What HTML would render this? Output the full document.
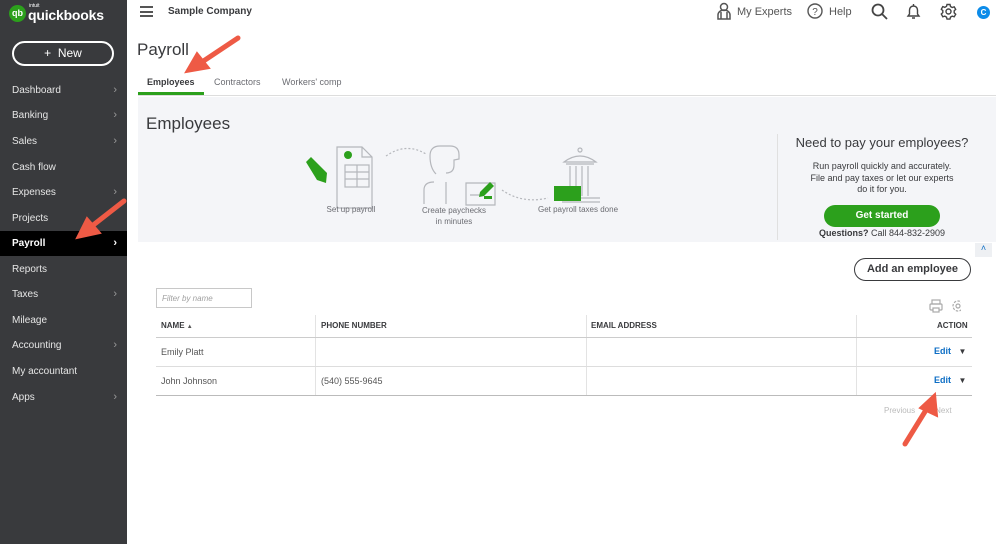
<!DOCTYPE html>
<html><head><style>
*{margin:0;padding:0;box-sizing:border-box}
body{width:999px;height:544px;overflow:hidden;background:#fff;font-family:"Liberation Sans",sans-serif;position:relative;color:#393a3d}
.sb{position:absolute;left:0;top:0;width:127px;height:544px;background:#393a3d;color:#e8e8e8}
.logo{position:absolute;left:9px;top:4px;display:flex;align-items:center}
.qb{width:17px;height:17px;border-radius:50%;background:#2ca01c;color:#fff;font-size:9px;font-weight:bold;text-align:center;line-height:17px}
.new{position:absolute;left:12px;top:41px;width:102px;height:25px;border:2px solid #fff;border-radius:14px;color:#fff;font-size:12px;text-align:center;line-height:21px}
.nav{position:absolute;left:0;width:127px;height:25px;font-size:10px;line-height:25px;padding-left:12px;color:#e6e6e6}
.nav .c{position:absolute;right:10px;top:0;color:#999;font-size:11px}
.act{background:#000;color:#fff;font-weight:bold}
.abs{position:absolute}
</style></head><body>
<div class="sb">
 <div class="logo"><div class="qb">qb</div><div style="margin-left:2px;color:#fff;line-height:1"><div style="font-size:5px;margin-left:1px">intuit</div><div style="font-size:14px;font-weight:bold;margin-top:-1px;letter-spacing:-0.2px">quickbooks</div></div></div>
 <div class="new">+&nbsp; New</div>
 <div class="nav" style="top:78px">Dashboard<span class="c">›</span></div>
 <div class="nav" style="top:103px">Banking<span class="c">›</span></div>
 <div class="nav" style="top:129px">Sales<span class="c">›</span></div>
 <div class="nav" style="top:155px">Cash flow</div>
 <div class="nav" style="top:180px">Expenses<span class="c">›</span></div>
 <div class="nav" style="top:206px">Projects</div>
 <div class="nav act" style="top:231px">Payroll<span class="c" style="color:#fff">›</span></div>
 <div class="nav" style="top:257px">Reports</div>
 <div class="nav" style="top:282px">Taxes<span class="c">›</span></div>
 <div class="nav" style="top:308px">Mileage</div>
 <div class="nav" style="top:333px">Accounting<span class="c">›</span></div>
 <div class="nav" style="top:359px">My accountant</div>
 <div class="nav" style="top:385px">Apps<span class="c">›</span></div>
</div>
<div class="abs" style="left:140px;top:6px;width:13px;height:11px;border-top:2px solid #555;border-bottom:2px solid #555"><div style="margin-top:2.5px;height:2px;background:#555"></div></div>
<div class="abs" style="left:168px;top:6px;font-size:10px;font-weight:bold;color:#393a3d">Sample Company</div>
<svg class="abs" style="left:716px;top:2px" width="16" height="18" viewBox="0 0 16 18" fill="none" stroke="#555" stroke-width="1.5"><circle cx="8" cy="5" r="3.5"/><path d="M2 17v-4a6 5 0 0112 0v4zM5 10v7M11 10v7"/></svg>
<div class="abs" style="left:737px;top:6px;font-size:11px;color:#555">My Experts</div>
<svg class="abs" style="left:807px;top:3px" width="16" height="16" viewBox="0 0 16 16"><circle cx="8" cy="8" r="7" fill="none" stroke="#555" stroke-width="1.4"/><text x="8" y="12" font-size="10" text-anchor="middle" fill="#555" font-family="Liberation Sans">?</text></svg>
<div class="abs" style="left:829px;top:6px;font-size:11px;color:#555">Help</div>
<svg class="abs" style="left:871px;top:3px" width="17" height="17" fill="none" stroke="#444" stroke-width="1.8"><circle cx="7" cy="7" r="5.5"/><path d="M11 11l5 5"/></svg>
<svg class="abs" style="left:906px;top:3px" width="15" height="17" fill="none" stroke="#444" stroke-width="1.4"><path d="M2 13h11l-1.5-2V7a4 4 0 00-8 0v4zM6 15h3M7.5 1v2"/></svg>
<svg class="abs" style="left:940px;top:3px" width="17" height="17" viewBox="0 0 17 17" fill="none" stroke="#444" stroke-width="1.4"><circle cx="8.5" cy="8.5" r="2.5"/><path d="M7 1.5h3l.5 2 1.7 1 2-.7 1.5 2.6-1.5 1.4v2l1.5 1.4-1.5 2.6-2-.7-1.7 1-.5 2H7l-.5-2-1.7-1-2 .7L1.3 11l1.5-1.4v-2L1.3 6.2 2.8 3.6l2 .7 1.7-1z"/></svg>
<div class="abs" style="left:977px;top:6px;width:13px;height:13px;border-radius:50%;background:#0d8ce9;color:#fff;font-size:8px;font-weight:bold;text-align:center;line-height:13px">C</div>
<div class="abs" style="left:137px;top:40px;font-size:17px;color:#393a3d">Payroll</div>
<div class="abs" style="left:147px;top:77px;font-size:9px;font-weight:bold">Employees</div>
<div class="abs" style="left:138px;top:92px;width:66px;height:3px;background:#2ca01c"></div>
<div class="abs" style="left:214px;top:77px;font-size:9px;color:#6b6c72">Contractors</div>
<div class="abs" style="left:282px;top:77px;font-size:9px;color:#6b6c72">Workers' comp</div>
<div class="abs" style="left:138px;top:95px;width:858px;height:1px;background:#ddd"></div>
<div class="abs" style="left:138px;top:97px;width:858px;height:145px;background:#f4f5f8"></div>
<div class="abs" style="left:777px;top:134px;width:1px;height:106px;background:#e0e0e0"></div>
<div class="abs" style="left:146px;top:114px;font-size:17px;color:#393a3d">Employees</div>
<svg class="abs" style="left:300px;top:140px" width="330" height="70" fill="none" stroke="#b5b7bc" stroke-width="1.2">
 <path d="M37 7h25l10 10v51H37z M62 7v10h10"/><rect x="45" y="25" width="24" height="22"/><path d="M45 32h24M45 39h24M57 25v22"/>
 <circle cx="48" cy="15" r="4" fill="#2ca01c" stroke="none"/>
 <path d="M6 22l5-5 16 16-1 10-9-3z" fill="#2ca01c" stroke="none"/>
 <path d="M86 16q20-14 40-2" stroke-dasharray="2 2"/>
 <path d="M136 34q-6-6-6-18q0-10 10-10h10q9 0 9 9v4l-5 1v5q0 8-8 8M124 64v-14q0-8 10-8M146 42v22M166 43h29v22h-29z M170 55h10"/>
 <path d="M180 52l10-10 4 4-10 10-5 1z" fill="#2ca01c" stroke="none"/><rect x="184" y="56" width="8" height="3" fill="#2ca01c" stroke="none"/>
 <path d="M202 50q20 14 46 8" stroke-dasharray="2 2"/>
 <path d="M264 22q16-12 32 0zM266 24h28M270 26v30M276 26v30M282 26v30M288 26v30M262 58h38M262 62h38"/>
 <circle cx="280" cy="10" r="2"/>
 <rect x="254" y="46" width="27" height="15" fill="#2ca01c" stroke="none"/>
</svg>
<div class="abs" style="left:310px;top:205px;width:82px;text-align:center;font-size:8px;color:#6b6c72">Set up payroll</div>
<div class="abs" style="left:410px;top:205px;width:88px;text-align:center;font-size:8px;color:#6b6c72;line-height:11px">Create paychecks<br>in minutes</div>
<div class="abs" style="left:528px;top:205px;width:100px;text-align:center;font-size:8px;color:#6b6c72">Get payroll taxes done</div>
<div class="abs" style="left:780px;top:135px;width:204px;text-align:center;font-size:13px;color:#393a3d">Need to pay your employees?</div>
<div class="abs" style="left:780px;top:161px;width:204px;text-align:center;font-size:9px;line-height:11.5px;color:#393a3d">Run payroll quickly and accurately.<br>File and pay taxes or let our experts<br>do it for you.</div>
<div class="abs" style="left:824px;top:205px;width:116px;height:22px;border-radius:12px;background:#2ca01c;color:#fff;font-size:10px;font-weight:bold;text-align:center;line-height:22px">Get started</div>
<div class="abs" style="left:780px;top:228px;width:204px;text-align:center;font-size:9px"><b>Questions?</b> Call 844-832-2909</div>
<div class="abs" style="left:975px;top:243px;width:17px;height:14px;background:#eef0f3;color:#0d6ec5;font-size:9px;text-align:center">˄</div>
<div class="abs" style="left:854px;top:258px;width:117px;height:23px;border:1.5px solid #393a3d;border-radius:12px;text-align:center;line-height:21px;font-size:11px;font-weight:bold">Add an employee</div>
<div class="abs" style="left:156px;top:288px;width:96px;height:20px;border:1px solid #c8c8c8;font-size:8px;font-style:italic;color:#a0a0a0;padding:5px 5px">Filter by name</div>
<svg class="abs" style="left:929px;top:299px" width="32" height="14" fill="none" stroke="#aaa" stroke-width="1.2"><rect x="1" y="5" width="12" height="6" rx="1"/><rect x="3" y="1" width="8" height="4"/><rect x="4" y="9" width="6" height="4" fill="#fff"/><circle cx="29" cy="7" r="2"/><circle cx="29" cy="7" r="5" stroke-dasharray="2.5 1.3"/></svg>
<div class="abs" style="left:315px;top:315px;width:1px;height:80px;background:#e3e3e3"></div>
<div class="abs" style="left:586px;top:315px;width:1px;height:80px;background:#e3e3e3"></div>
<div class="abs" style="left:856px;top:315px;width:1px;height:80px;background:#e3e3e3"></div>
<div class="abs" style="left:156px;top:337px;width:816px;height:1px;background:#ccc"></div>
<div class="abs" style="left:156px;top:366px;width:816px;height:1px;background:#ddd"></div>
<div class="abs" style="left:156px;top:395px;width:816px;height:1px;background:#bbb"></div>
<div class="abs" style="left:161px;top:321px;font-size:8px;font-weight:bold">NAME <span style="font-size:6px;color:#555">▲</span></div>
<div class="abs" style="left:321px;top:321px;font-size:8px;font-weight:bold">PHONE NUMBER</div>
<div class="abs" style="left:591px;top:321px;font-size:8px;font-weight:bold">EMAIL ADDRESS</div>
<div class="abs" style="left:937px;top:321px;font-size:8px;font-weight:bold">ACTION</div>
<div class="abs" style="left:161px;top:347px;font-size:9px;color:#555">Emily Platt</div>
<div class="abs" style="left:161px;top:376px;font-size:9px;color:#555">John Johnson</div>
<div class="abs" style="left:321px;top:376px;font-size:9px;color:#555">(540) 555-9645</div>
<div class="abs" style="left:934px;top:346px;font-size:9px;font-weight:bold;color:#0d6ec5">Edit <span style="color:#393a3d;font-size:8px;margin-left:5px">▼</span></div>
<div class="abs" style="left:934px;top:375px;font-size:9px;font-weight:bold;color:#0d6ec5">Edit <span style="color:#393a3d;font-size:8px;margin-left:5px">▼</span></div>
<div class="abs" style="left:884px;top:406px;font-size:8px;color:#bbb">Previous &nbsp;&nbsp;<span style="color:#555">1</span>&nbsp;&nbsp;&nbsp; Next</div>
<svg class="abs" style="left:0;top:0" width="999" height="544">
 <g stroke="#ee5a45" stroke-width="5" stroke-linecap="round" fill="#ee5a45">
  <path d="M238 38L202 62"/><path d="M186 72l11-19 12 15z" stroke-width="2"/>
  <path d="M124 201L92 226"/><path d="M77 238l10-20 13 15z" stroke-width="2"/>
  <path d="M905 444L926 410"/><path d="M935 394l2 22-17-8z" stroke-width="2"/>
 </g>
</svg>
</body></html>
